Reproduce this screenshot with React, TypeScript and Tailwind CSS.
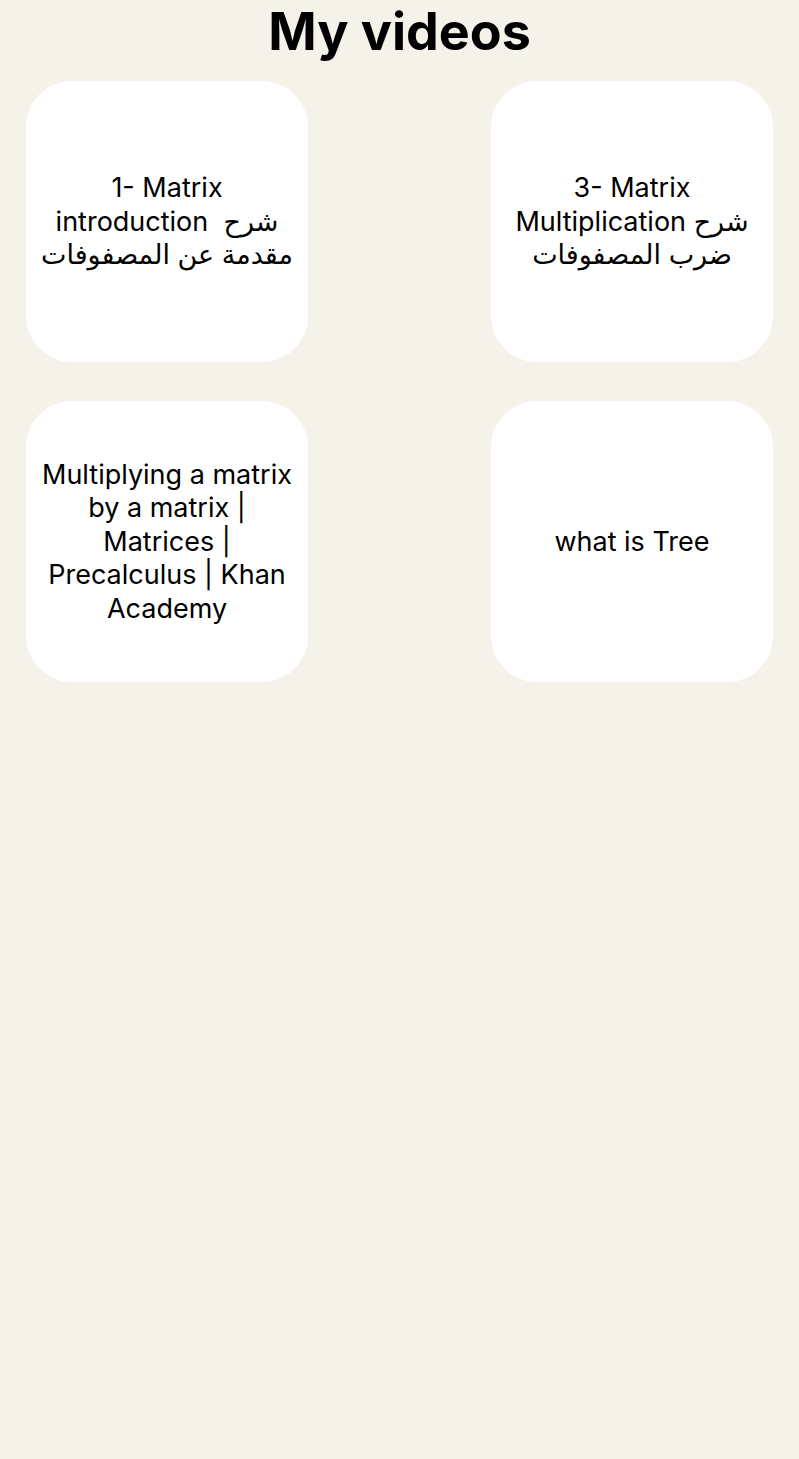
const videos = [
  "1- Matrix introduction  شرح مقدمة عن المصفوفات",
  "3- Matrix Multiplication شرح ضرب المصفوفات",
  "Multiplying a matrix by a matrix | Matrices | Precalculus | Khan Academy",
  "what is Tree",
];

function VideoCard({ title }: { title: string }) {
  return (
    <button
      type="button"
      className="flex h-[281px] w-[282px] items-center justify-center rounded-[46px] bg-white px-[13px] text-center text-[27px] leading-[33.5px] text-black"
    >
      <span className="whitespace-pre-wrap">{title}</span>
    </button>
  );
}

export default function App() {
  return (
    <div
      className="min-h-[1459px] w-full bg-[#f5f2ea]"
      style={{ fontFamily: "Inter, 'DejaVu Sans', sans-serif" }}
    >
      <h1 className="h-16 text-center text-[52px] font-bold leading-[64px] text-black">
        My videos
      </h1>
      <div className="mt-[17px] grid grid-cols-2 gap-y-[39px] px-[26px]">
        {videos.map((v, i) => (
          <div key={i} className={i % 2 === 0 ? "flex justify-start" : "flex justify-end"}>
            <VideoCard title={v} />
          </div>
        ))}
      </div>
    </div>
  );
}
